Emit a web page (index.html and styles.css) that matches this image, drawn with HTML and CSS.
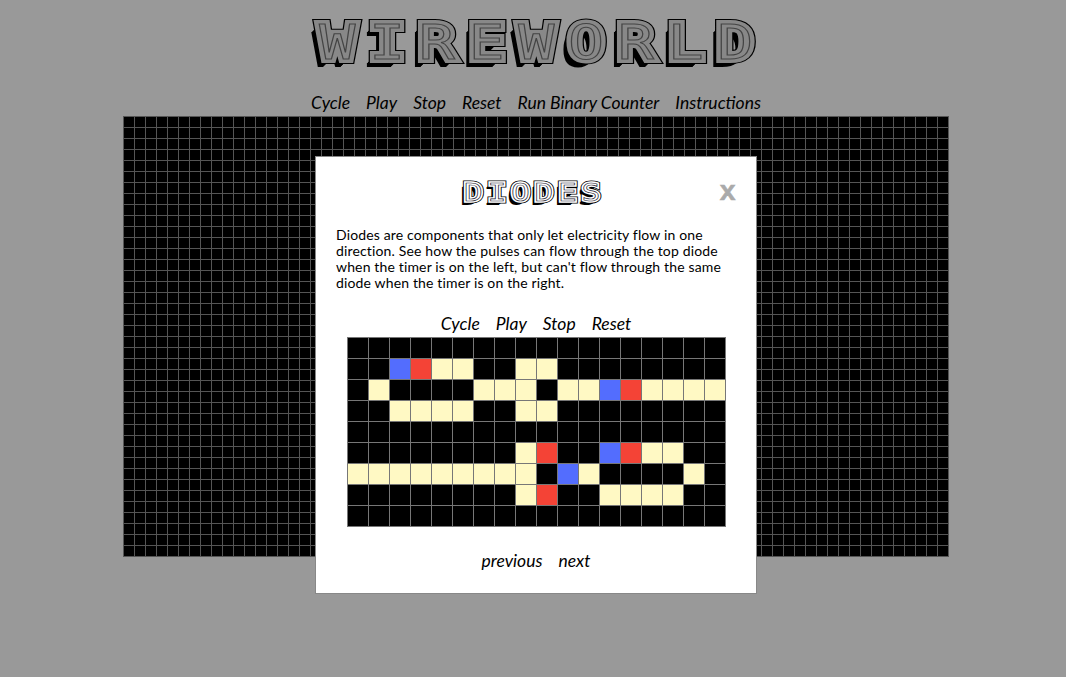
FILE: index.html
```html
<!DOCTYPE html>
<html lang="en">
<head>
<meta charset="utf-8">
<title>Wireworld</title>
<link rel="stylesheet" href="styles.css">
</head>
<body>
<h1 class="logo" data-text="WIREWORLD"><span>WIREWORLD</span></h1>
<nav class="nav">
  <a>Cycle</a><a>Play</a><a>Stop</a><a>Reset</a><a>Run Binary Counter</a><a>Instructions</a>
</nav>
<main class="canvas">
  <section class="modal">
    <header class="modal-head">
      <h2 class="logo logo-small" data-text="DIODES"><span>DIODES</span></h2>
      <button class="close">x</button>
    </header>
    <p class="copy">Diodes are components that only let electricity flow in one direction. See how the pulses can flow through the top diode when the timer is on the left, but can't flow through the same diode when the timer is on the right.</p>
    <nav class="nav nav-small"><a>Cycle</a><a>Play</a><a>Stop</a><a>Reset</a></nav>
    <div class="board">
      <i></i><i></i><i></i><i></i><i></i><i></i><i></i><i></i><i></i><i></i><i></i><i></i><i></i><i></i><i></i><i></i><i></i><i></i>
      <i></i><i></i><i class="b"></i><i class="r"></i><i class="y"></i><i class="y"></i><i></i><i></i><i class="y"></i><i class="y"></i><i></i><i></i><i></i><i></i><i></i><i></i><i></i><i></i>
      <i></i><i class="y"></i><i></i><i></i><i></i><i></i><i class="y"></i><i class="y"></i><i class="y"></i><i></i><i class="y"></i><i class="y"></i><i class="b"></i><i class="r"></i><i class="y"></i><i class="y"></i><i class="y"></i><i class="y"></i>
      <i></i><i></i><i class="y"></i><i class="y"></i><i class="y"></i><i class="y"></i><i></i><i></i><i class="y"></i><i class="y"></i><i></i><i></i><i></i><i></i><i></i><i></i><i></i><i></i>
      <i></i><i></i><i></i><i></i><i></i><i></i><i></i><i></i><i></i><i></i><i></i><i></i><i></i><i></i><i></i><i></i><i></i><i></i>
      <i></i><i></i><i></i><i></i><i></i><i></i><i></i><i></i><i class="y"></i><i class="r"></i><i></i><i></i><i class="b"></i><i class="r"></i><i class="y"></i><i class="y"></i><i></i><i></i>
      <i class="y"></i><i class="y"></i><i class="y"></i><i class="y"></i><i class="y"></i><i class="y"></i><i class="y"></i><i class="y"></i><i class="y"></i><i></i><i class="b"></i><i class="y"></i><i></i><i></i><i></i><i></i><i class="y"></i><i></i>
      <i></i><i></i><i></i><i></i><i></i><i></i><i></i><i></i><i class="y"></i><i class="r"></i><i></i><i></i><i class="y"></i><i class="y"></i><i class="y"></i><i class="y"></i><i></i><i></i>
      <i></i><i></i><i></i><i></i><i></i><i></i><i></i><i></i><i></i><i></i><i></i><i></i><i></i><i></i><i></i><i></i><i></i><i></i>
    </div>
    <nav class="nav nav-pager"><a>previous</a><a>next</a></nav>
  </section>
</main>
</body>
</html>
```
FILE: styles.css
```css
* { box-sizing: border-box; }
html, body { margin: 0; height: 100%; overflow: hidden; }
body {
  background: #999;
  padding-left: 6px;
  display: flex;
  flex-direction: column;
  align-items: center;
  font-family: "Lato", "Liberation Sans", sans-serif;
  color: #000;
}
.logo {
  position: relative;
  margin: 13px 0 0 14px;
  height: 66px;
  font: 400 48px/58px "DejaVu Sans Mono", monospace;
  letter-spacing: 10.9px;
  white-space: nowrap;
  transform: scaleX(1.25);
}
.logo::before, .logo::after {
  content: attr(data-text);
  position: absolute;
  left: 0;
  top: 0;
}
.logo::before {
  z-index: 0;
  color: #000;
  -webkit-text-stroke: 10px #000;
  text-shadow: -.8px 1px 0 #000, -1.6px 2px 0 #000, -2.4px 3px 0 #000, -3.2px 4px 0 #000, -4px 5px 0 #000, -4.8px 6px 0 #000, -5.6px 7px 0 #000, -6.4px 8px 0 #000;
}
.logo::after {
  z-index: 1;
  color: #888;
  -webkit-text-stroke: 8px #888;
}
.logo span {
  position: relative;
  z-index: 2;
  color: #888;
  -webkit-text-stroke: 1px #444;
}
.nav {
  display: flex;
  justify-content: center;
  gap: 16px;
  font-size: 17.5px;
  line-height: 22px;
  font-style: italic;
  height: 37px;
  padding-top: 13px;
}
.canvas {
  position: relative;
  flex: none;
  width: 826px;
  height: 441px;
  background-color: #000;
  background-image: linear-gradient(#555 1px, transparent 1px), linear-gradient(90deg, #555 1px, transparent 1px);
  background-size: 11px 11px;
  box-shadow: inset -1px -1px 0 #555;
}
.modal {
  position: absolute;
  left: 192px;
  top: 40px;
  width: 442px;
  height: 438px;
  background: #fff;
  border: 1px solid #888;
  padding: 0 20px;
}
.modal-head {
  position: relative;
  height: 70px;
  display: flex;
  justify-content: center;
}
.logo-small {
  margin: 22px 0 0 -4px;
  height: 27px;
  font-size: 25px;
  line-height: 27px;
  letter-spacing: 3.75px;
}
.logo-small::before {
  -webkit-text-stroke: 5px #000;
  text-shadow: -.8px 1px 0 #000, -1.6px 2px 0 #000, -2.4px 3px 0 #000, -3.2px 4px 0 #000;
}
.logo-small::after { color: #fff; -webkit-text-stroke: 3.5px #fff; }
.logo-small span { color: #fff; -webkit-text-stroke: .6px #223; }
.close {
  position: absolute;
  right: 0;
  top: 21px;
  padding: 0;
  border: 0;
  background: none;
  color: #aaa;
  font: 700 28px/30px "Liberation Mono", monospace;
  -webkit-text-stroke: .5px #aaa;
}
.copy {
  margin: 0;
  font-size: 14px;
  line-height: 16px;
  letter-spacing: .15px;
}
.nav-small { height: 46px; padding-top: 22px; }
.board {
  display: grid;
  grid-template-columns: repeat(18, 20px);
  grid-auto-rows: 20px;
  gap: 1px;
  padding: 1px;
  width: 379px;
  margin: 0 auto;
  background: #777;
}
.board i { background: #000; }
.board .y { background: #fff9c4; }
.board .r { background: #f44336; }
.board .b { background: #536dfe; }
.nav-pager { padding-top: 23px; }
```
